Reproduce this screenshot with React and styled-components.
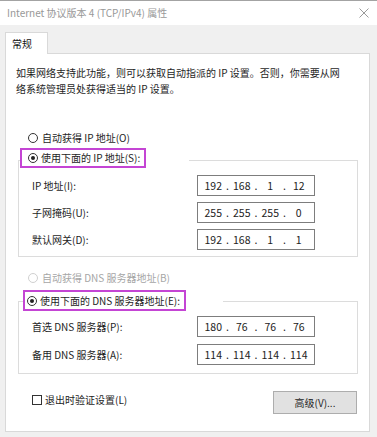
import React from "react";
import styled, { createGlobalStyle } from "styled-components";

const Global = createGlobalStyle`
  html, body { margin: 0; padding: 0; background: #f0f0f0; }
  body {
    font-family: "Noto Sans CJK SC", "Noto Sans", sans-serif;
    font-size: 10px;
    color: #1e1e1e;
  }
  * { box-sizing: border-box; }
`;

const Window = styled.div`
  width: 377px;
  height: 437px;
  display: flex;
  flex-direction: column;
  background: #f0f0f0;
  overflow: hidden;
`;

const TitleBar = styled.div`
  height: 25px;
  flex: none;
  background: #ffffff;
  border-top: 1px solid #a3a3a3;
  display: flex;
  align-items: center;
  justify-content: space-between;
  padding: 0 7px 0 7px;
`;

const Title = styled.span`
  color: #989898;
  font-size: 10px;
  line-height: 14px;
`;

const Close = styled.svg`
  width: 10px;
  height: 10px;
  margin-right: 1px;
`;

const Body = styled.div`
  flex: 1;
  display: flex;
  flex-direction: column;
  padding: 7px 7px 5px 5px;
`;

const TabStrip = styled.div`
  display: flex;
  height: 21px;
  flex: none;
`;

const Tab = styled.div`
  width: 43px;
  height: 22px;
  background: #ffffff;
  border: 1px solid #d9d9d9;
  border-bottom: none;
  padding-left: 6px;
  display: flex;
  align-items: center;
  font-size: 10px;
  color: #111;
  position: relative;
  z-index: 1;
`;

const Panel = styled.div`
  flex: 1;
  background: #ffffff;
  border: 1px solid #d9d9d9;
  display: flex;
  flex-direction: column;
`;

const Description = styled.p`
  margin: 11px 10px 0 10px;
  font-size: 10px;
  line-height: 16px;
  color: #1e1e1e;
`;

const OptionRow = styled.div`
  display: flex;
  align-items: center;
  gap: 4px;
  height: 16px;
  margin: ${(p) => p.$mt}px 0 0 22px;
  color: ${(p) => (p.$disabled ? "#a6a6a6" : "#1e1e1e")};
  line-height: 16px;
`;

const Circle = styled.span`
  width: 10px;
  height: 10px;
  border-radius: 50%;
  border: 1px solid ${(p) => (p.$disabled ? "#d0d0d0" : "#333333")};
  background: #ffffff;
  display: flex;
  align-items: center;
  justify-content: center;
  flex: none;
  &::after {
    content: "";
    width: 4px;
    height: 4px;
    border-radius: 50%;
    background: ${(p) => (p.$checked ? "#222222" : "transparent")};
  }
`;

const GroupBox = styled.div`
  margin: ${(p) => p.$mt}px 11px 0 12px;
  border: 1px solid #dcdcdc;
  padding: 0 0 ${(p) => p.$pb}px 13px;
  display: flex;
  flex-direction: column;
`;

const GroupHeader = styled.div`
  width: ${(p) => p.$w}px;
  margin: ${(p) => p.$mt}px 0 0 ${(p) => p.$ml}px;
  background: #ffffff;
  display: flex;
`;

const Highlight = styled.div`
  height: ${(p) => p.$h}px;
  border: 2px solid #c445d4;
  display: flex;
  align-items: center;
  gap: 3px;
  padding: 0 4px 0 ${(p) => p.$pl}px;
  color: #1e1e1e;
  line-height: 16px;
`;

const Rows = styled.div`
  display: flex;
  flex-direction: column;
  gap: ${(p) => p.$gap}px;
  margin-top: ${(p) => p.$mt}px;
`;

const FieldRow = styled.div`
  display: grid;
  grid-template-columns: 165px 118px;
  align-items: center;
  height: 21px;
`;

const FieldLabel = styled.span`
  line-height: 16px;
  color: #1e1e1e;
`;

const IpBox = styled.div`
  height: 21px;
  border: 1px solid #7d7d7d;
  background: #ffffff;
  display: grid;
  grid-template-columns: 1fr 4px 1fr 4px 1fr 4px 1fr;
  align-items: center;
  padding: 0 3px;
  font-size: 10.5px;
  color: #222;
  line-height: 16px;
`;

const Seg = styled.span`
  text-align: center;
`;

const Dot = styled.span`
  text-align: center;
`;

const BottomRow = styled.div`
  display: flex;
  align-items: center;
  justify-content: space-between;
  margin: 17px 12px 0 26px;
`;

const CheckLabel = styled.label`
  display: flex;
  align-items: center;
  gap: 3px;
  line-height: 16px;
  color: #1e1e1e;
  margin-bottom: 6px;
`;

const Box = styled.span`
  width: 10px;
  height: 10px;
  border: 1px solid #333333;
  background: #ffffff;
  flex: none;
`;

const Button = styled.button`
  width: 84px;
  height: 23px;
  background: #e1e1e1;
  border: 1px solid #adadad;
  font-family: inherit;
  font-size: 10px;
  color: #1e1e1e;
  padding: 0;
  display: flex;
  align-items: center;
  justify-content: center;
`;

function Radio({ checked, disabled }) {
  return <Circle $checked={checked} $disabled={disabled} />;
}

function IpField({ value }) {
  const parts = value.split(".");
  const out = [];
  parts.forEach((p, i) => {
    out.push(<Seg key={"s" + i}>{p}</Seg>);
    if (i < parts.length - 1) out.push(<Dot key={"d" + i}>.</Dot>);
  });
  return <IpBox>{out}</IpBox>;
}

const ipRows = [
  ["IP 地址(I):", "192.168.1.12"],
  ["子网掩码(U):", "255.255.255.0"],
  ["默认网关(D):", "192.168.1.1"],
];

const dnsRows = [
  ["首选 DNS 服务器(P):", "180.76.76.76"],
  ["备用 DNS 服务器(A):", "114.114.114.114"],
];

export default function App() {
  return (
    <Window>
      <Global />
      <TitleBar>
        <Title>Internet 协议版本 4 (TCP/IPv4) 属性</Title>
        <Close viewBox="0 0 10 10">
          <path d="M0.5 0.5 L9.5 9.5 M9.5 0.5 L0.5 9.5" stroke="#9a9a9a" strokeWidth="1" fill="none" />
        </Close>
      </TitleBar>
      <Body>
        <TabStrip>
          <Tab>常规</Tab>
        </TabStrip>
        <Panel>
          <Description>
            如果网络支持此功能，则可以获取自动指派的 IP 设置。否则，你需要从网
            <br />
            络系统管理员处获得适当的 IP 设置。
          </Description>

          <OptionRow $mt={33}>
            <Radio />
            <span>自动获得 IP 地址(O)</span>
          </OptionRow>

          <GroupBox $mt={14} $pb={6}>
            <GroupHeader $mt={-13} $ml={-12} $w={169}>
              <Highlight $h={20} $pl={6}>
                <Radio checked />
                <span>使用下面的 IP 地址(S):</span>
              </Highlight>
            </GroupHeader>
            <Rows $mt={7} $gap={6}>
              {ipRows.map(([l, v]) => (
                <FieldRow key={l}>
                  <FieldLabel>{l}</FieldLabel>
                  <IpField value={v} />
                </FieldRow>
              ))}
            </Rows>
          </GroupBox>

          <OptionRow $mt={13} $disabled>
            <Radio disabled />
            <span>自动获得 DNS 服务器地址(B)</span>
          </OptionRow>

          <GroupBox $mt={15} $pb={8}>
            <GroupHeader $mt={-12} $ml={-9} $w={200}>
              <Highlight $h={21} $pl={2}>
                <Radio checked />
                <span>使用下面的 DNS 服务器地址(E):</span>
              </Highlight>
            </GroupHeader>
            <Rows $mt={5} $gap={7}>
              {dnsRows.map(([l, v]) => (
                <FieldRow key={l}>
                  <FieldLabel>{l}</FieldLabel>
                  <IpField value={v} />
                </FieldRow>
              ))}
            </Rows>
          </GroupBox>

          <BottomRow>
            <CheckLabel>
              <Box />
              <span>退出时验证设置(L)</span>
            </CheckLabel>
            <Button>高级(V)...</Button>
          </BottomRow>
        </Panel>
      </Body>
    </Window>
  );
}
